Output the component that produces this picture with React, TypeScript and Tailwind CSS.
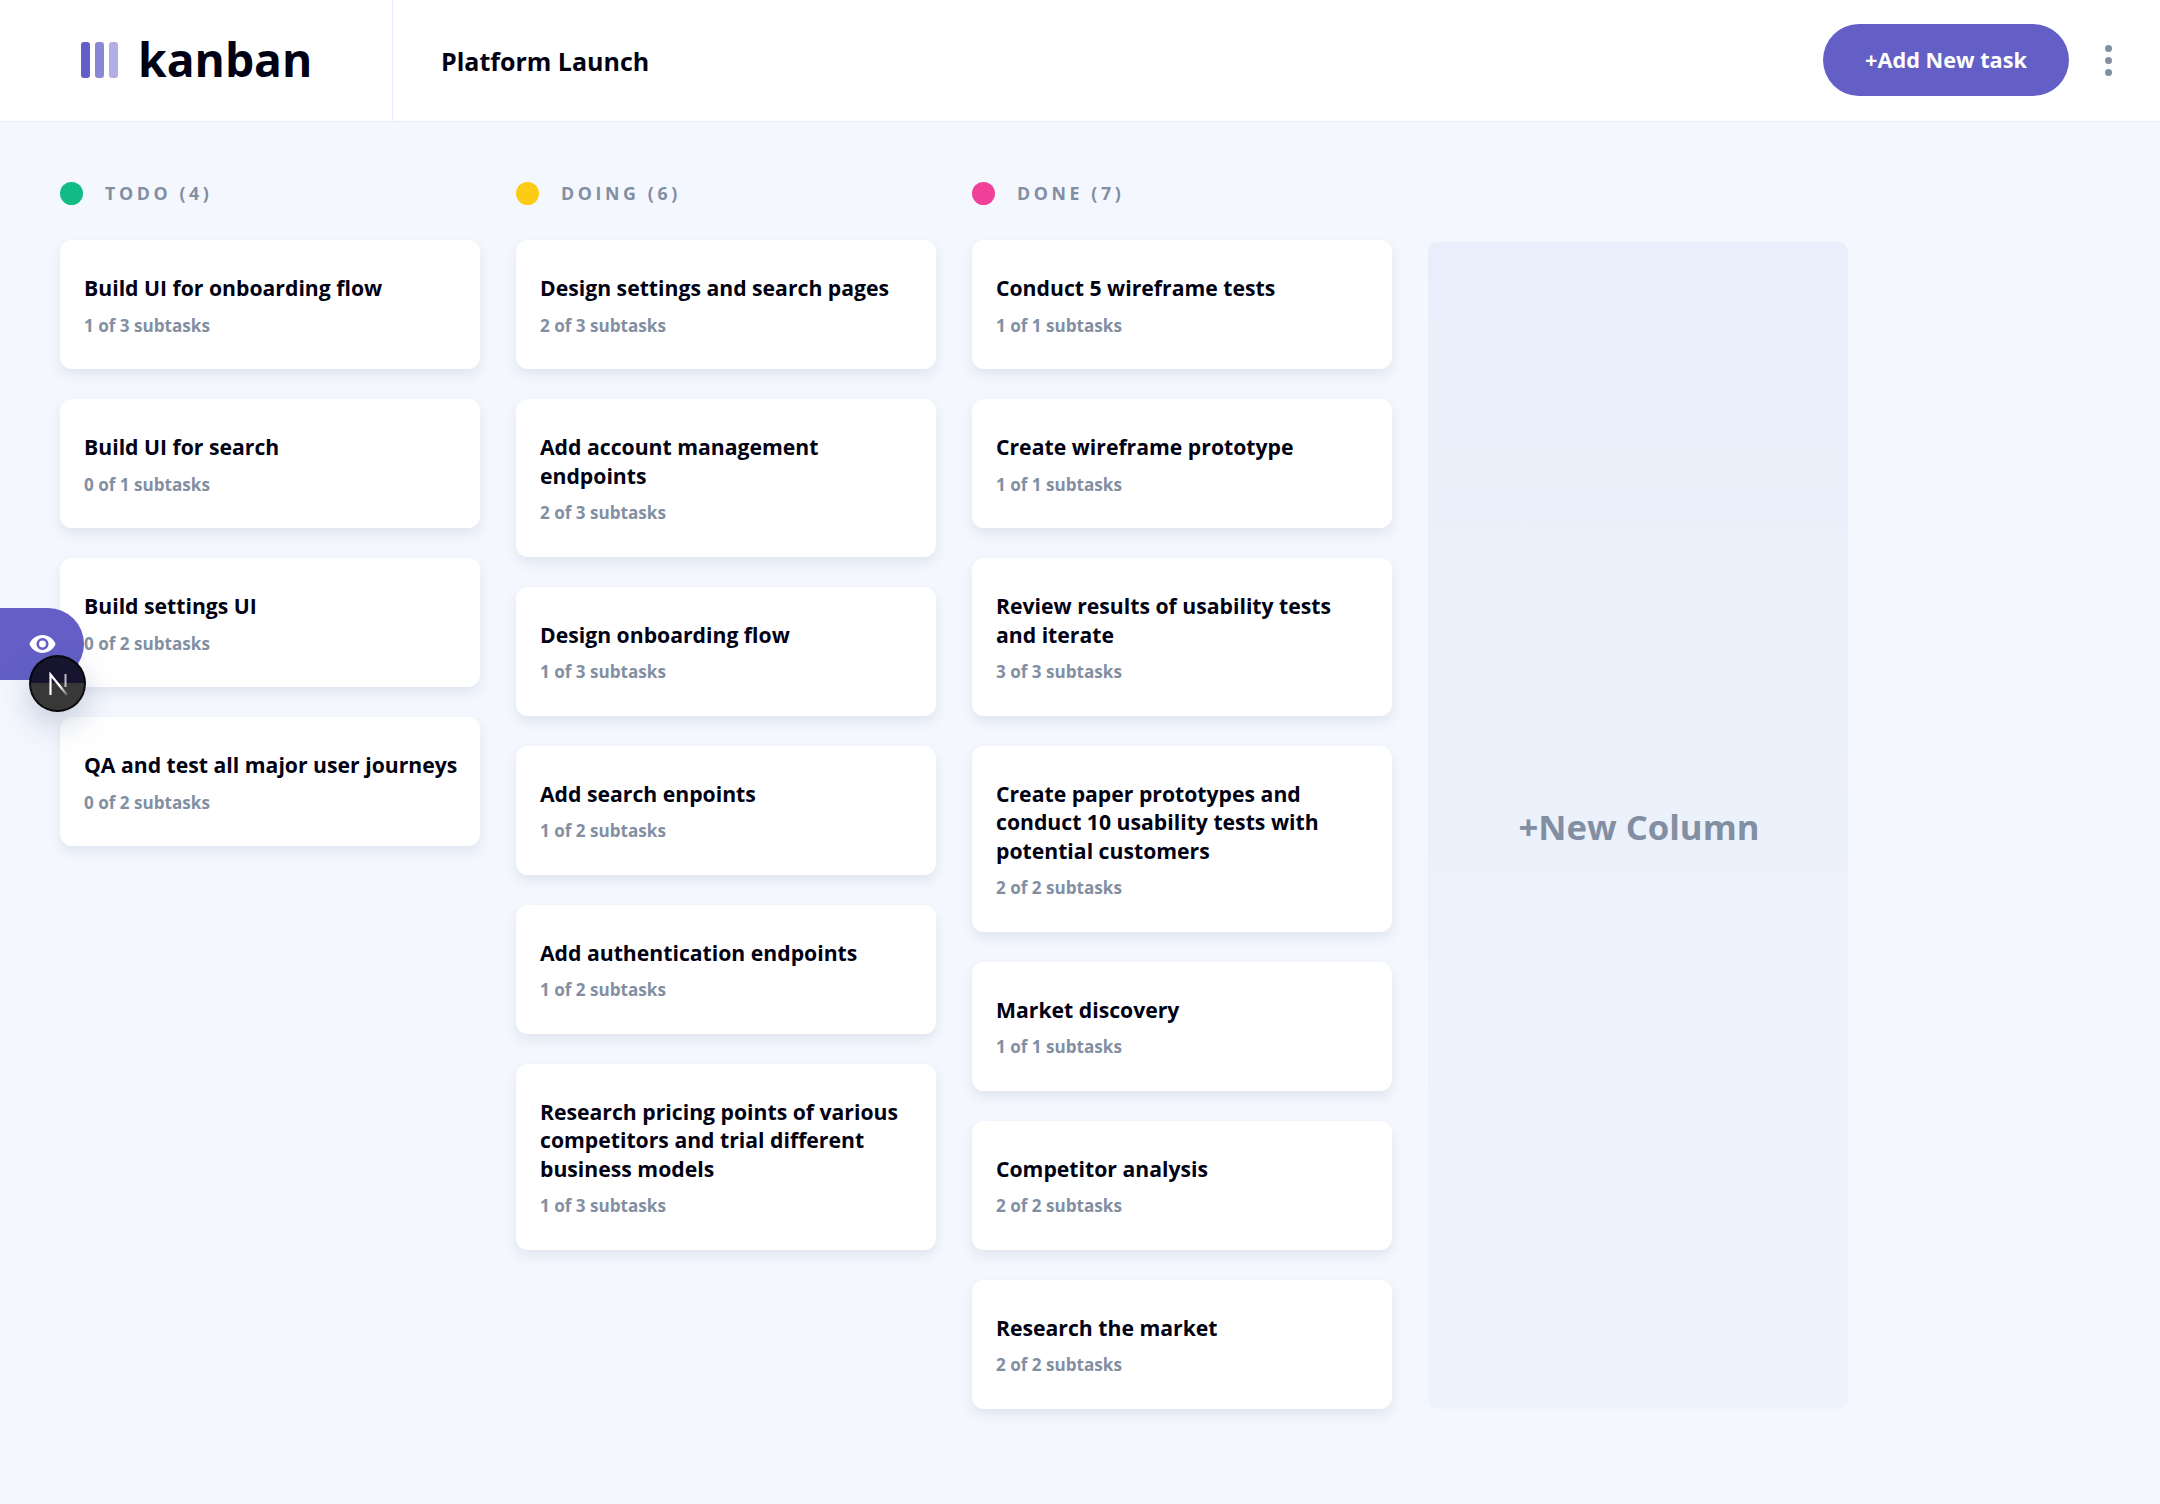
const columns = [
  {
    name: 'TODO (4)',
    dot: 'bg-[#10BC84]',
    tasks: [
      ['Build UI for onboarding flow', '1 of 3 subtasks'],
      ['Build UI for search', '0 of 1 subtasks'],
      ['Build settings UI', '0 of 2 subtasks'],
      ['QA and test all major user journeys', '0 of 2 subtasks'],
    ],
  },
  {
    name: 'DOING (6)',
    dot: 'bg-[#FCCB14]',
    tasks: [
      ['Design settings and search pages', '2 of 3 subtasks'],
      ['Add account management endpoints', '2 of 3 subtasks'],
      ['Design onboarding flow', '1 of 3 subtasks'],
      ['Add search enpoints', '1 of 2 subtasks'],
      ['Add authentication endpoints', '1 of 2 subtasks'],
      ['Research pricing points of various competitors and trial different business models', '1 of 3 subtasks'],
    ],
  },
  {
    name: 'DONE (7)',
    dot: 'bg-[#F0409A]',
    tasks: [
      ['Conduct 5 wireframe tests', '1 of 1 subtasks'],
      ['Create wireframe prototype', '1 of 1 subtasks'],
      ['Review results of usability tests and iterate', '3 of 3 subtasks'],
      ['Create paper prototypes and conduct 10 usability tests with potential customers', '2 of 2 subtasks'],
      ['Market discovery', '1 of 1 subtasks'],
      ['Competitor analysis', '2 of 2 subtasks'],
      ['Research the market', '2 of 2 subtasks'],
    ],
  },
];

function Logo() {
  return (
    <div className="flex items-center gap-[20px]">
      <div className="flex h-9 gap-[5px]">
        <div className="w-[9px] rounded-[3px] bg-[#635FC7]" />
        <div className="w-[9px] rounded-[3px] bg-[#635FC7]/75" />
        <div className="w-[9px] rounded-[3px] bg-[#635FC7]/50" />
      </div>
      <span className="text-[46.2px] leading-none font-bold text-[#000112]">kanban</span>
    </div>
  );
}

function TaskCard({ title, sub }: { title: string; sub: string }) {
  return (
    <div className="rounded-xl bg-white pt-[34px] pr-[20px] pb-[30.5px] pl-6 shadow-[0_6px_12px_rgba(54,78,126,0.1)]">
      <h3 className="text-[21.2px] leading-[28.5px] font-bold text-[#000112]">{title}</h3>
      <p className="mt-[9px] text-[17.1px] leading-[27px] font-bold text-[#828FA3]">{sub}</p>
    </div>
  );
}

export default function App() {
  return (
    <div className="relative flex min-h-[1504px] flex-col bg-[#F4F7FD] font-['Open_Sans',sans-serif]">
      <header className="flex h-[122px] items-stretch border-b border-[#E4EBFA] bg-white">
        <div className="flex w-[393px] items-center border-r border-[#E4EBFA] pl-[81px]">
          <Logo />
        </div>
        <div className="flex flex-1 items-center justify-between pr-12 pl-12">
          <h1 className="mt-[2px] text-[25px] font-bold text-[#000112]">Platform Launch</h1>
          <div className="flex items-center gap-9">
            <button className="mb-[2px] h-[72px] w-[246px] rounded-full bg-[#635FC7] pt-[2px] text-[21.7px] font-bold text-white">
              +Add New task
            </button>
            <div className="flex flex-col gap-[5px]">
              <span className="size-[7px] rounded-full bg-[#828FA3]" />
              <span className="size-[7px] rounded-full bg-[#828FA3]" />
              <span className="size-[7px] rounded-full bg-[#828FA3]" />
            </div>
          </div>
        </div>
      </header>

      <main className="flex items-start gap-9 px-[60px] pt-[59px]">
        {columns.map((col) => (
          <section key={col.name} className="w-[420px]">
            <div className="flex h-6 items-center gap-[22px]">
              <span className={`size-[23px] rounded-full ${col.dot}`} />
              <h2 className="text-[17.8px] font-bold tracking-[3.6px] text-[#828FA3]">{col.name}</h2>
            </div>
            <div className="mt-[35px] flex flex-col gap-[30px]">
              {col.tasks.map(([title, sub]) => (
                <TaskCard key={title} title={title} sub={sub} />
              ))}
            </div>
          </section>
        ))}
        <div className="mt-[61px] flex h-[1167px] w-[420px] items-center justify-center rounded-[9px] bg-linear-to-b from-[#E9EFFA] to-[#E9EFFA]/50 pt-[3px] pl-[2px]">
          <span className="text-[34.7px] font-bold text-[#828FA3]">+New Column</span>
        </div>
      </main>

      <div className="absolute top-[608px] left-0 flex h-[72px] w-[84px] items-center justify-center rounded-r-[36px] bg-[#635FC7]">
        <svg width="27" height="18" viewBox="0 0 16 11" fill="none">
          <path
            fillRule="evenodd"
            d="M8 0C4.4 0 1.4 2.2 0 5.5 1.4 8.8 4.4 11 8 11s6.6-2.2 8-5.5C14.6 2.2 11.6 0 8 0Zm0 9.2a3.7 3.7 0 1 1 0-7.4 3.7 3.7 0 0 1 0 7.4Z"
            fill="#fff"
          />
          <circle cx="8" cy="5.5" r="2.1" fill="#fff" />
        </svg>
      </div>

      <div className="absolute top-[655px] left-[29px] flex size-[57px] items-center justify-center rounded-full border-2 border-black/80 bg-linear-to-b from-[#17142f] from-50% to-[#383838] to-50% shadow-[0_12px_30px_rgba(54,78,126,0.25)]">
        <svg width="24" height="24" viewBox="0 0 24 24" fill="none">
          <defs>
            <linearGradient id="nFade" x1="6" y1="4" x2="20" y2="23" gradientUnits="userSpaceOnUse">
              <stop offset="0.55" stopColor="#fff" />
              <stop offset="1" stopColor="#fff" stopOpacity="0.25" />
            </linearGradient>
          </defs>
          <path d="M4.5 23V2.5L21 23" stroke="url(#nFade)" strokeWidth="2.2" />
          <path d="M19.5 2V15" stroke="#fff" strokeOpacity="0.7" strokeWidth="2" />
        </svg>
      </div>
    </div>
  );
}
